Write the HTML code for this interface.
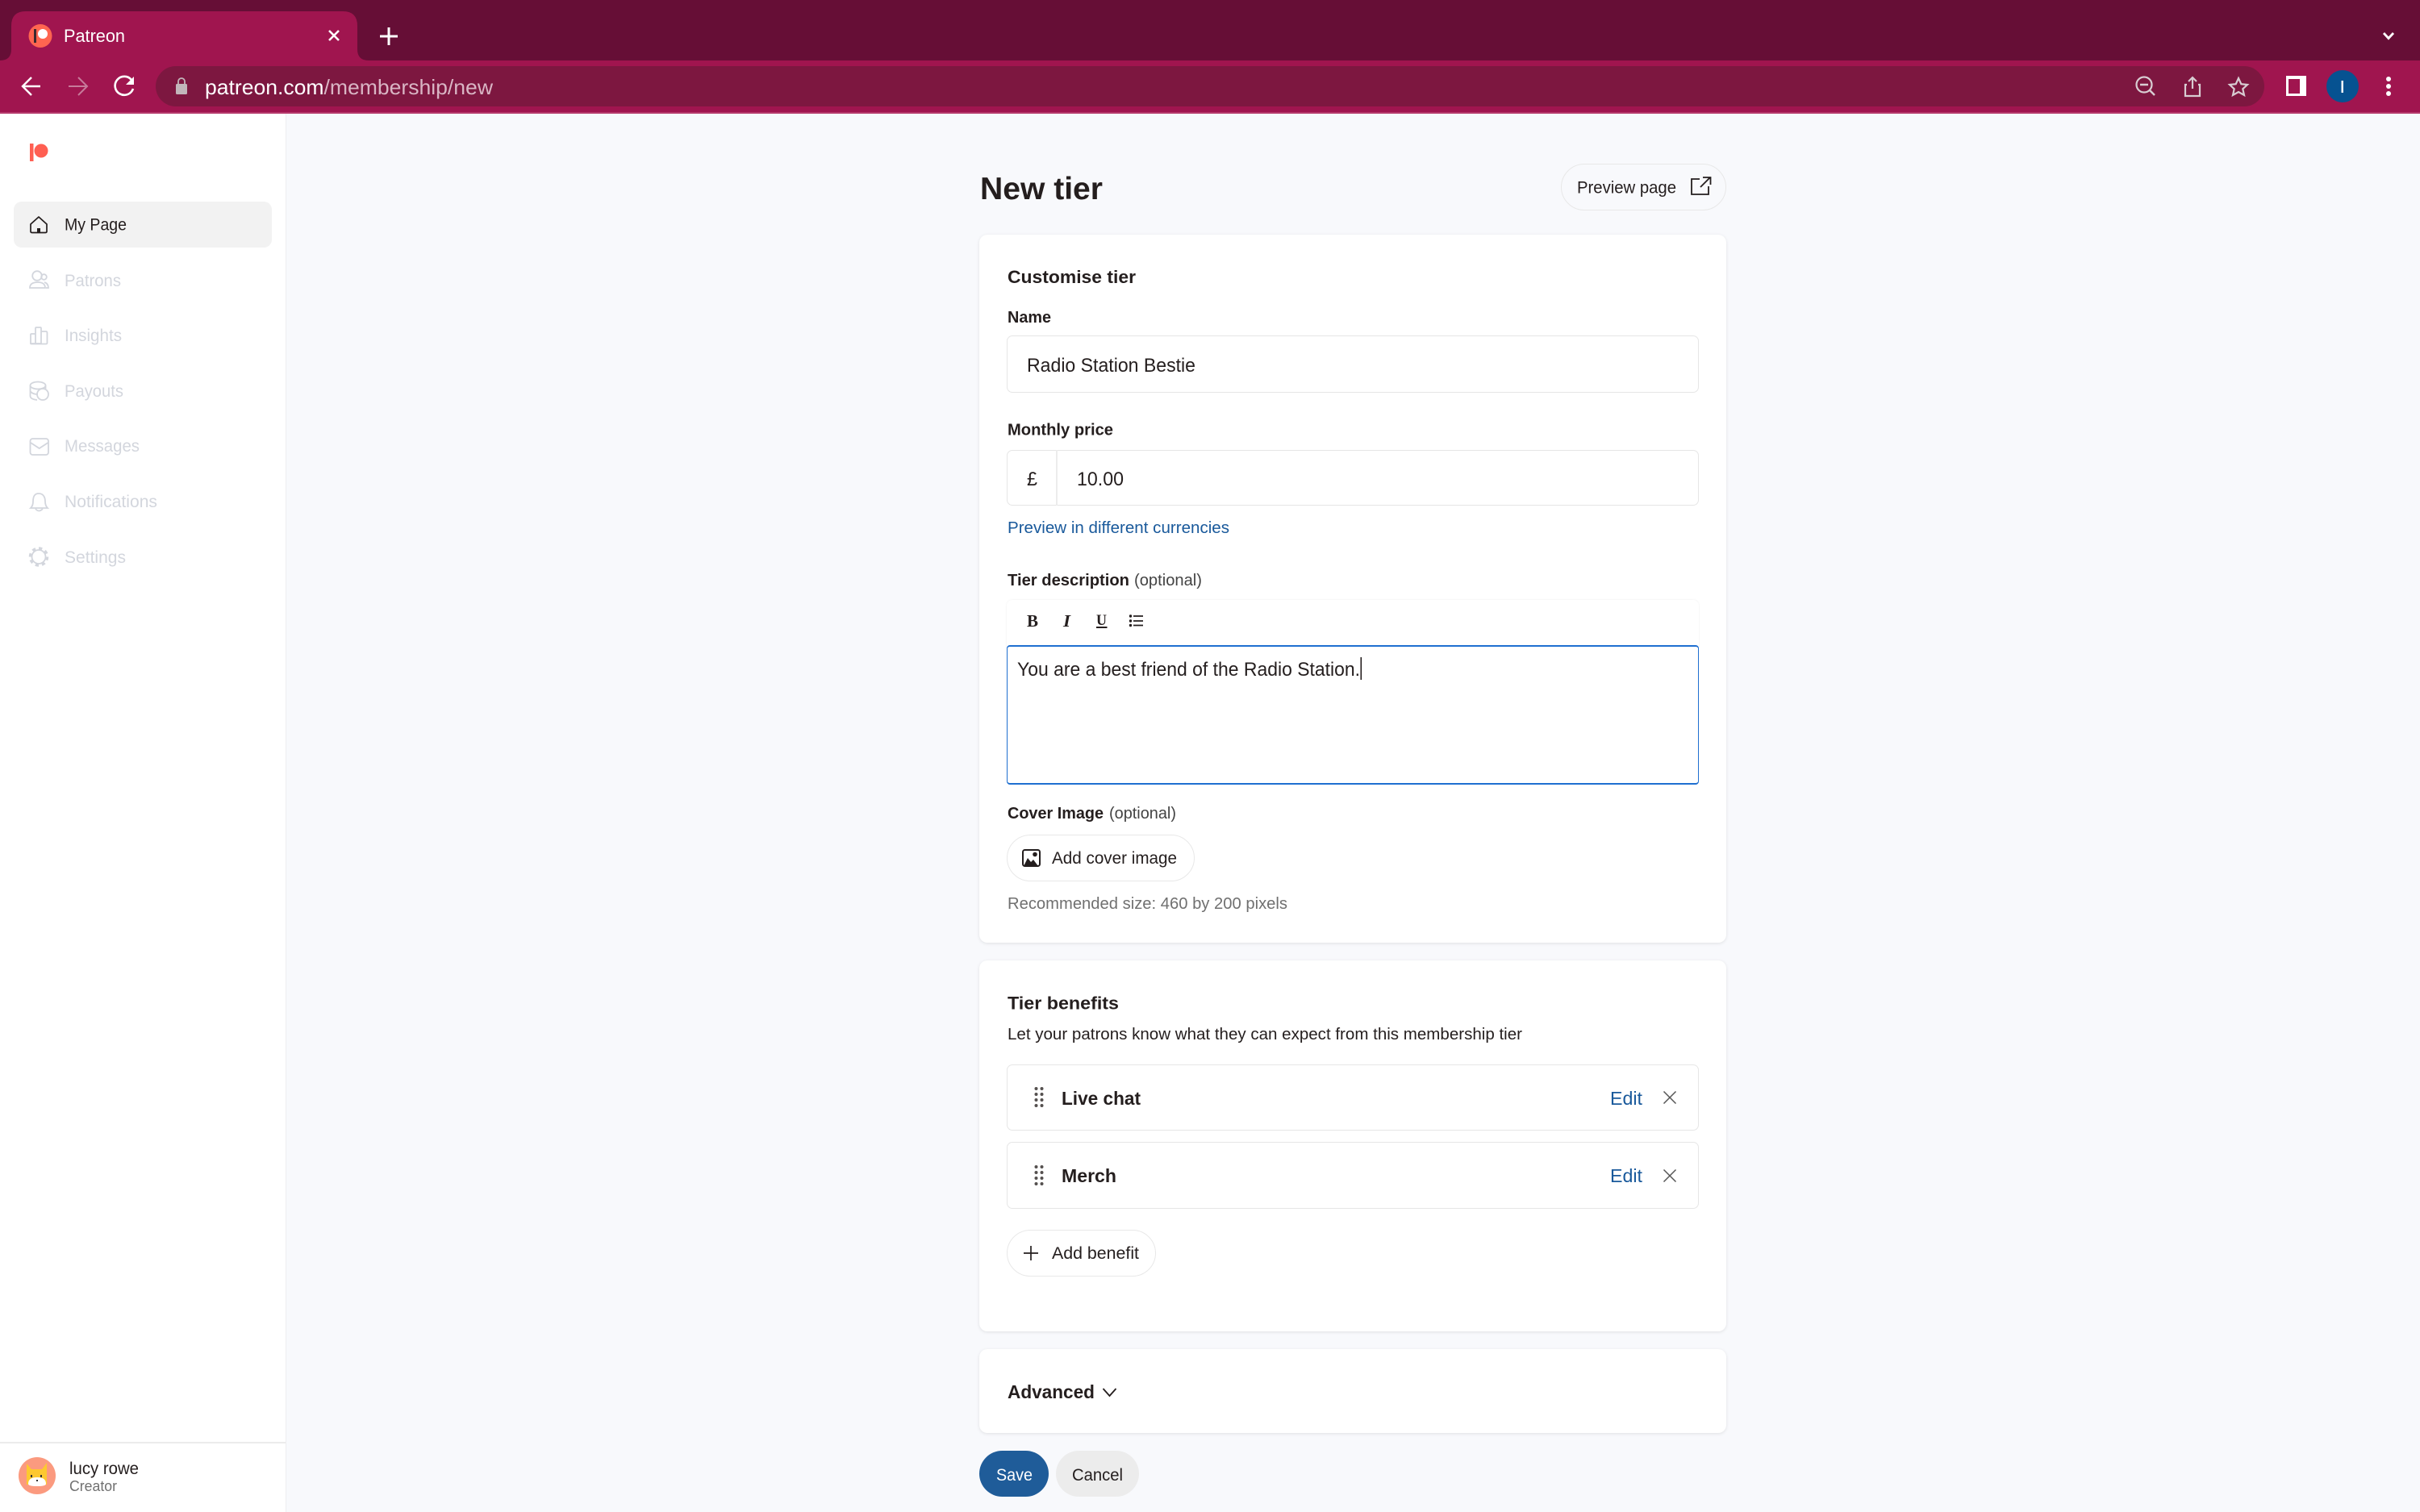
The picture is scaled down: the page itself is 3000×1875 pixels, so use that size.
<!DOCTYPE html>
<html lang="en">
<head>
<meta charset="utf-8">
<title>Patreon - New tier</title>
<style>
html,body{margin:0;padding:0;width:3000px;height:1875px;overflow:hidden;background:#f8f9fc;font-family:"Liberation Sans",sans-serif}
.box{position:absolute;box-sizing:border-box}
.card{background:#fff;border-radius:10px;box-shadow:0 1px 4px rgba(0,0,0,.10)}
.input{background:#fff;border:1.5px solid #e6e6e6;border-radius:7px}
.pill{border:1.5px solid #e8e8e8;border-radius:30px;background:#fff}
svg{position:absolute;left:0;top:0}
text{font-family:"Liberation Sans",sans-serif;fill:#241e1e}
.b{font-weight:bold}
.link{fill:#19599b}
.grey{fill:#d3d6dd}
</style>
</head>
<body>
<div class="box" style="left:0;top:0;width:3000px;height:75px;background:#660e36"></div>
<div class="box" style="left:0;top:75px;width:3000px;height:64px;background:#a0154f"></div>
<div class="box" style="left:0;top:139px;width:3000px;height:2px;background:#b53a6c"></div>
<div class="box" style="left:193px;top:82px;width:2614px;height:50px;border-radius:25px;background:#7d1740"></div>

<div class="box" style="left:0;top:141px;width:355px;height:1734px;background:#fff;border-right:1.5px solid #eeeef0"></div>
<div class="box" style="left:17px;top:250px;width:320px;height:57px;border-radius:10px;background:#f2f2f2"></div>
<div class="box" style="left:0;top:1788px;width:354px;height:2px;background:#ececec"></div>

<div class="box pill" style="left:1935px;top:203px;width:205px;height:58px;background:#f8f9fc"></div>
<div class="box card" style="left:1214px;top:291px;width:926px;height:878px"></div>
<div class="box input" style="left:1248px;top:416px;width:858px;height:71px"></div>
<div class="box input" style="left:1248px;top:558px;width:858px;height:69px"></div>
<div class="box" style="left:1309px;top:558px;width:1.5px;height:69px;background:#ececec"></div>
<div class="box" style="left:1248px;top:744px;width:858px;height:60px;border-radius:7px 7px 0 0;background:#fff;box-shadow:0 0 2px rgba(0,0,0,.08)"></div>
<div class="box" style="left:1248px;top:800px;width:858px;height:173px;background:#fff;border:1.5px solid #1f6fd0;border-top-width:2.5px;border-bottom-width:2px;border-radius:4px"></div>
<div class="box pill" style="left:1248px;top:1035px;width:233px;height:58px"></div>
<div class="box card" style="left:1214px;top:1191px;width:926px;height:460px"></div>
<div class="box input" style="left:1248px;top:1320px;width:858px;height:82px"></div>
<div class="box input" style="left:1248px;top:1416px;width:858px;height:83px"></div>
<div class="box pill" style="left:1248px;top:1525px;width:185px;height:58px"></div>
<div class="box card" style="left:1214px;top:1673px;width:926px;height:104px"></div>
<div class="box" style="left:1214px;top:1799px;width:86px;height:57px;border-radius:29px;background:#1f5c99"></div>
<div class="box" style="left:1309px;top:1799px;width:103px;height:57px;border-radius:29px;background:#ececec"></div>

<svg width="3000" height="1875" viewBox="0 0 3000 1875" xmlns="http://www.w3.org/2000/svg">
  <!-- browser tab -->
  <path d="M0 75Q14 75 14 61V32Q14 14 32 14H425Q443 14 443 32V61Q443 75 457 75Z" fill="#a0154f"/>
  <circle cx="50" cy="44.5" r="14.5" fill="#ff6550"/>
  <rect x="42" y="36" width="3" height="17" fill="#3a2a30"/>
  <circle cx="53" cy="42" r="6" fill="#fff"/>
  <text x="79" y="52" font-size="22" textLength="76" lengthAdjust="spacingAndGlyphs" style="fill:#fff">Patreon</text>
  <path d="M408 38L420 50M420 38L408 50" stroke="#fff" stroke-width="2.6" fill="none"/>
  <path d="M482 34V56M471 45H493" stroke="#fff" stroke-width="3" fill="none"/>
  <path d="M2955 41L2961 47.5L2967 41" stroke="#fff" stroke-width="2.8" fill="none"/>

  <!-- toolbar -->
  <path d="M50 107H29M39 96L28 107L39 118" stroke="#fff" stroke-width="2.4" fill="none"/>
  <path d="M85 107H107M97 96L108 107L97 118" stroke="#c77a9a" stroke-width="2" fill="none"/>
  <path d="M163 99A11.5 11.5 0 1 0 165 110" stroke="#fff" stroke-width="2.6" fill="none"/>
  <path d="M166 95V105H156Z" fill="#fff"/>
  <rect x="218" y="104" width="14" height="13" rx="1.5" fill="#c2b5ba"/>
  <path d="M221 104V101A4 4 0 0 1 229 101V104" stroke="#c2b5ba" stroke-width="1.8" fill="none"/>
  <text x="254" y="117" font-size="26" textLength="357" lengthAdjust="spacingAndGlyphs"><tspan style="fill:#fff">patreon.com</tspan><tspan style="fill:#d9b5c4">/membership/new</tspan></text>
  <circle cx="2658" cy="105" r="9.5" stroke="#d8cdd2" stroke-width="2.2" fill="none"/>
  <path d="M2653 105H2663M2665 112L2671 118" stroke="#d8cdd2" stroke-width="2.4" fill="none"/>
  <path d="M2711 105H2709V119H2727V105H2725M2718 110V97M2713 101L2718 96L2723 101" stroke="#d8cdd2" stroke-width="2.2" fill="none"/>
  <path d="M2775 97L2778.3 104.2L2786 105L2780.3 110.3L2782 118L2775 114L2768 118L2769.7 110.3L2764 105L2771.7 104.2Z" stroke="#d8cdd2" stroke-width="2.2" fill="none"/>
  <rect x="2834" y="94" width="25" height="25" fill="#fff"/>
  <rect x="2837" y="98" width="14" height="18" fill="#a0154f"/>
  <circle cx="2904" cy="107" r="20" fill="#065291"/>
  <rect x="2902.5" y="100" width="2.4" height="15" fill="#fff"/>
  <circle cx="2961" cy="98" r="3" fill="#fff"/><circle cx="2961" cy="107" r="3" fill="#fff"/><circle cx="2961" cy="116" r="3" fill="#fff"/>

  <!-- sidebar -->
  <rect x="37" y="178" width="4.5" height="22" fill="#ff5f52"/>
  <circle cx="51" cy="187" r="8.5" fill="#ff5f52"/>
  <path d="M38 278L48 269L58 278V287Q58 288.500 56 288.500H40Q38 288.500 38 287Z" stroke="#241e1e" stroke-width="1.7" fill="none" stroke-linejoin="round"/>
  <rect x="46" y="283" width="4" height="6" fill="#241e1e"/>
  <text x="80" y="285.500" font-size="21" textLength="77" lengthAdjust="spacingAndGlyphs">My Page</text>

  <g fill="none" stroke="#d3d6dd" stroke-width="1.8" transform="translate(0,1)">
    <circle cx="46" cy="341" r="5.800"/><circle cx="54.500" cy="342.500" r="3.300"/>
    <path d="M37 356C37 351 41 349 47 349C52 349 56 351 56 356Z"/><path d="M55 349C58 350 60 352 60 356H57"/>
    <path d="M38 425V414Q38 413 39 413H44V425ZM44 425V406Q44 405 45 405H50Q51 405 51 406V425ZM51 410H57Q58.500 410 58.500 412V424Q58.500 425.500 57 425.500H39Q38 425.500 38 424"/>
    <ellipse cx="47" cy="477" rx="9.500" ry="4.500"/><path d="M37.500 477V490Q37.500 494 46 495M37.500 484Q40 488 47 488"/><path d="M56.500 477V481"/><circle cx="53" cy="488" r="7"/>
    <rect x="37.500" y="543" width="22.500" height="20" rx="3"/><path d="M38 548L48.700 555L59.500 548"/>
    <path d="M48 611C42 611 41 616 41 621C41 625 40 627 38 629H59C57 627 56 625 56 621C56 616 54 611 48 611ZM44 630Q48 635 53 630"/>
    <circle cx="48" cy="689.500" r="8.500"/><circle cx="48" cy="689.500" r="10.500" stroke-width="3.500" stroke-dasharray="4.200 4"/>
  </g>
  <g>
    <text class="grey" x="80" y="355" font-size="21" textLength="70" lengthAdjust="spacingAndGlyphs">Patrons</text>
    <text class="grey" x="80" y="423" font-size="21" textLength="71" lengthAdjust="spacingAndGlyphs">Insights</text>
    <text class="grey" x="80" y="492" font-size="21" textLength="73" lengthAdjust="spacingAndGlyphs">Payouts</text>
    <text class="grey" x="80" y="560" font-size="21" textLength="93" lengthAdjust="spacingAndGlyphs">Messages</text>
    <text class="grey" x="80" y="629" font-size="21" textLength="115" lengthAdjust="spacingAndGlyphs">Notifications</text>
    <text class="grey" x="80" y="698" font-size="21" textLength="76" lengthAdjust="spacingAndGlyphs">Settings</text>
  </g>

  <!-- footer avatar -->
  <circle cx="46" cy="1830" r="23" fill="#fb9a7f"/>
  <path d="M33 1841V1815L39 1822H45L52 1822L58 1814V1841Z" fill="#fdc830"/>
  <path d="M35 1840Q35 1832 46 1832Q57 1832 57 1840Q57 1843 46 1843Q35 1843 35 1840Z" fill="#fff"/>
  <rect x="38" y="1829" width="2" height="3" fill="#333"/><rect x="50" y="1829" width="2" height="3" fill="#333"/><rect x="45" y="1835" width="2" height="2" fill="#333"/>
  <text x="86" y="1828" font-size="21" textLength="86" lengthAdjust="spacingAndGlyphs">lucy rowe</text>
  <text x="86" y="1849" font-size="18" textLength="59" lengthAdjust="spacingAndGlyphs" style="fill:#707070">Creator</text>

  <!-- header -->
  <text class="b" x="1215" y="247" font-size="39" textLength="152" lengthAdjust="spacingAndGlyphs">New tier</text>
  <text x="1955" y="239.500" font-size="21" textLength="123" lengthAdjust="spacingAndGlyphs">Preview page</text>
  <path d="M2107 222H2097V241H2118V231M2108 232L2120 220M2111 220H2120.500V229" stroke="#241e1e" stroke-width="1.800" fill="none"/>

  <!-- card 1 -->
  <text class="b" x="1249" y="351" font-size="22" textLength="159" lengthAdjust="spacingAndGlyphs">Customise tier</text>
  <text class="b" x="1249" y="400" font-size="20" textLength="54" lengthAdjust="spacingAndGlyphs">Name</text>
  <text x="1273" y="461" font-size="24" textLength="209" lengthAdjust="spacingAndGlyphs">Radio Station Bestie</text>
  <text class="b" x="1249" y="539.500" font-size="20" textLength="131" lengthAdjust="spacingAndGlyphs">Monthly price</text>
  <text x="1273" y="602" font-size="24" textLength="13" lengthAdjust="spacingAndGlyphs">£</text>
  <text x="1335" y="602" font-size="24" textLength="58" lengthAdjust="spacingAndGlyphs">10.00</text>
  <text class="link" x="1249" y="661" font-size="20.500" textLength="275" lengthAdjust="spacingAndGlyphs">Preview in different currencies</text>
  <text class="b" x="1249" y="726" font-size="20" textLength="151" lengthAdjust="spacingAndGlyphs">Tier description</text>
  <text x="1406" y="726" font-size="20" textLength="84" lengthAdjust="spacingAndGlyphs" style="fill:#444">(optional)</text>

  <text x="1273" y="777" font-size="21" textLength="14" lengthAdjust="spacingAndGlyphs" style="font-family:'Liberation Serif',serif;font-weight:bold">B</text>
  <text x="1318" y="777" font-size="21" textLength="9" lengthAdjust="spacingAndGlyphs" style="font-family:'Liberation Serif',serif;font-weight:bold;font-style:italic">I</text>
  <text x="1359" y="775" font-size="19" textLength="13" lengthAdjust="spacingAndGlyphs" style="font-family:'Liberation Serif',serif;font-weight:bold">U</text>
  <rect x="1359" y="777" width="13.500" height="2" fill="#241e1e"/>
  <path d="M1405 764H1417M1405 770H1417M1405 775.500H1417" stroke="#241e1e" stroke-width="1.800" fill="none"/>
  <circle cx="1401.500" cy="764" r="1.700" fill="#241e1e"/><circle cx="1401.500" cy="770" r="1.700" fill="#241e1e"/><circle cx="1401.500" cy="775.500" r="1.700" fill="#241e1e"/>

  <text x="1261" y="838" font-size="24" textLength="425" lengthAdjust="spacingAndGlyphs">You are a best friend of the Radio Station.</text>
  <rect x="1686.500" y="815" width="1.600" height="28" fill="#241e1e"/>

  <text class="b" x="1249" y="1015" font-size="20" textLength="119" lengthAdjust="spacingAndGlyphs">Cover Image</text>
  <text x="1375" y="1015" font-size="20" textLength="83" lengthAdjust="spacingAndGlyphs" style="fill:#444">(optional)</text>
  <rect x="1268" y="1054" width="21" height="20" rx="2.500" fill="none" stroke="#241e1e" stroke-width="2"/>
  <path d="M1269 1074L1274 1064L1278 1069L1281 1066L1287 1074Z" fill="#241e1e"/>
  <circle cx="1283" cy="1059.500" r="2.800" fill="#241e1e"/>
  <text x="1304" y="1071" font-size="21" textLength="155" lengthAdjust="spacingAndGlyphs">Add cover image</text>
  <text x="1249" y="1127" font-size="20" textLength="347" lengthAdjust="spacingAndGlyphs" style="fill:#707070">Recommended size: 460 by 200 pixels</text>

  <!-- card 2 -->
  <text class="b" x="1249" y="1251.500" font-size="22" textLength="138" lengthAdjust="spacingAndGlyphs">Tier benefits</text>
  <text x="1249" y="1289" font-size="20" textLength="638" lengthAdjust="spacingAndGlyphs">Let your patrons know what they can expect from this membership tier</text>

  <g fill="#55504f">
    <circle cx="1284.500" cy="1350" r="2"/><circle cx="1291.500" cy="1350" r="2"/>
    <circle cx="1284.500" cy="1357" r="2"/><circle cx="1291.500" cy="1357" r="2"/>
    <circle cx="1284.500" cy="1364" r="2"/><circle cx="1291.500" cy="1364" r="2"/>
    <circle cx="1284.500" cy="1371" r="2"/><circle cx="1291.500" cy="1371" r="2"/>
    <circle cx="1284.500" cy="1447" r="2"/><circle cx="1291.500" cy="1447" r="2"/>
    <circle cx="1284.500" cy="1454" r="2"/><circle cx="1291.500" cy="1454" r="2"/>
    <circle cx="1284.500" cy="1461" r="2"/><circle cx="1291.500" cy="1461" r="2"/>
    <circle cx="1284.500" cy="1468" r="2"/><circle cx="1291.500" cy="1468" r="2"/>
  </g>
  <text class="b" x="1316" y="1370" font-size="23" textLength="98" lengthAdjust="spacingAndGlyphs">Live chat</text>
  <text class="b" x="1316" y="1466" font-size="23" textLength="68" lengthAdjust="spacingAndGlyphs">Merch</text>
  <text class="link" x="1996" y="1370" font-size="23" textLength="40" lengthAdjust="spacingAndGlyphs">Edit</text>
  <text class="link" x="1996" y="1466" font-size="23" textLength="40" lengthAdjust="spacingAndGlyphs">Edit</text>
  <path d="M2062.500 1353.500L2077.500 1368.500M2077.500 1353.500L2062.500 1368.500M2062.500 1450.500L2077.500 1465.500M2077.500 1450.500L2062.500 1465.500" stroke="#555" stroke-width="1.500" fill="none"/>
  <path d="M1278 1545V1563M1269 1554H1287" stroke="#241e1e" stroke-width="1.700" fill="none"/>
  <text x="1304" y="1561" font-size="21" textLength="108" lengthAdjust="spacingAndGlyphs">Add benefit</text>

  <!-- card 3 -->
  <text class="b" x="1249" y="1734" font-size="23" textLength="108" lengthAdjust="spacingAndGlyphs">Advanced</text>
  <path d="M1367.500 1722L1375.500 1731L1383.500 1722" stroke="#241e1e" stroke-width="1.800" fill="none"/>

  <!-- actions -->
  <text x="1235" y="1836" font-size="21" textLength="45" lengthAdjust="spacingAndGlyphs" style="fill:#fff">Save</text>
  <text x="1329" y="1836" font-size="21" textLength="63" lengthAdjust="spacingAndGlyphs">Cancel</text>
</svg>
</body>
</html>
